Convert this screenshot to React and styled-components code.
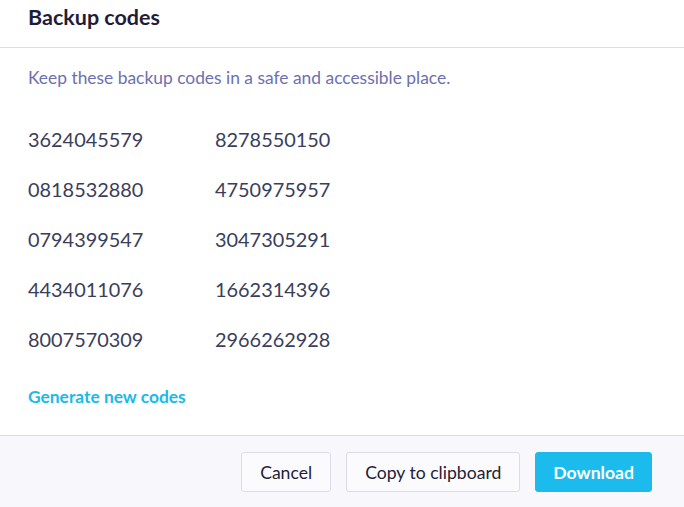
import React from "react";
import styled, { createGlobalStyle } from "styled-components";

const GlobalStyle = createGlobalStyle`
  html, body {
    margin: 0;
    padding: 0;
    background: #ffffff;
    font-family: Lato, "Open Sans", sans-serif;
  }
`;

const codes = [
  ["3624045579", "8278550150"],
  ["0818532880", "4750975957"],
  ["0794399547", "3047305291"],
  ["4434011076", "1662314396"],
  ["8007570309", "2966262928"],
];

const Modal = styled.div`
  width: 684px;
  height: 507px;
  display: flex;
  flex-direction: column;
  background: #ffffff;
`;

const Header = styled.div`
  box-sizing: border-box;
  height: 48px;
  padding: 3px 28px 0;
  border-bottom: 1px solid #dcdcec;
`;

const Title = styled.h2`
  margin: 0;
  font-size: 21.5px;
  line-height: 28px;
  font-weight: 700;
  color: #1f1e38;
`;

const Body = styled.div`
  padding: 19px 28px 0;
  flex: 0 0 387px;
  box-sizing: border-box;
`;

const Description = styled.p`
  margin: 0;
  font-size: 17.4px;
  line-height: 22px;
  color: #6c70b0;
`;

const CodeGrid = styled.div`
  display: grid;
  grid-template-columns: 187px auto;
  row-gap: 24px;
  margin-top: 37px;
`;

const Code = styled.span`
  font-size: 19.9px;
  line-height: 26px;
  color: #3a3e5a;
`;

const Link = styled.a`
  display: inline-block;
  margin-top: 34px;
  font-size: 17.4px;
  line-height: 22px;
  font-weight: 700;
  color: #1ab9ea;
  text-decoration: none;
  cursor: pointer;
`;

const Footer = styled.div`
  flex: 1;
  display: flex;
  justify-content: flex-end;
  align-items: flex-start;
  gap: 15px;
  padding: 16px 32px 0;
  background: #f7f7fc;
  border-top: 1px solid #dcdcec;
`;

const Button = styled.button`
  height: 40px;
  padding: 0 ${(p) => (p.$primary ? "17px" : "18px")};
  font-family: Lato, "Open Sans", sans-serif;
  font-size: 17.6px;
  font-weight: ${(p) => (p.$primary ? 700 : 400)};
  color: ${(p) => (p.$primary ? "#ffffff" : "#1f1e38")};
  background: ${(p) => (p.$primary ? "#1bbbee" : "#fbfbfd")};
  border: 1px solid ${(p) => (p.$primary ? "#1bbbee" : "#dcdcec")};
  border-radius: 3px;
  cursor: pointer;
`;

export default function App() {
  return (
    <>
      <GlobalStyle />
      <Modal>
        <Header>
          <Title>Backup codes</Title>
        </Header>
        <Body>
          <Description>
            Keep these backup codes in a safe and accessible place.
          </Description>
          <CodeGrid>
            {codes.map(([a, b]) => (
              <React.Fragment key={a}>
                <Code>{a}</Code>
                <Code>{b}</Code>
              </React.Fragment>
            ))}
          </CodeGrid>
          <Link>Generate new codes</Link>
        </Body>
        <Footer>
          <Button>Cancel</Button>
          <Button>Copy to clipboard</Button>
          <Button $primary>Download</Button>
        </Footer>
      </Modal>
    </>
  );
}
